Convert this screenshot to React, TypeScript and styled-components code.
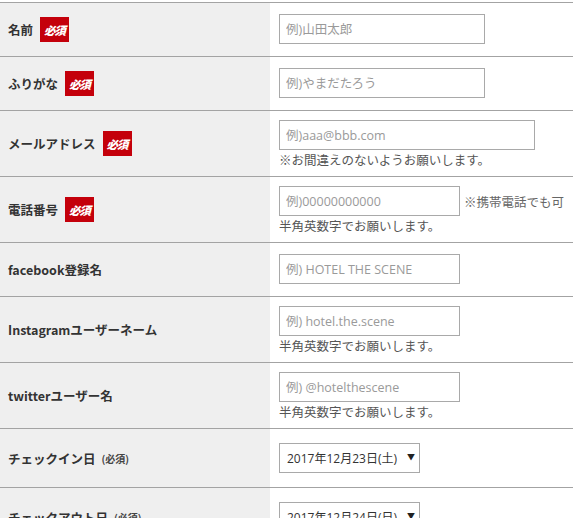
import React from "react";
import styled, { createGlobalStyle } from "styled-components";

const GlobalStyle = createGlobalStyle`
  body {
    margin: 0;
    background: #fff;
    font-family: "Noto Sans CJK JP", "Noto Sans", sans-serif;
    color: #333;
  }
`;

type RowKind = "plain" | "note" | "select";

interface Field {
  label: string;
  required?: "badge" | "small";
  kind: RowKind;
  placeholder?: string;
  width?: number;
  side?: string;
  note?: string;
  value?: string;
}

const fields: Field[] = [
  { label: "名前", required: "badge", kind: "plain", placeholder: "例)山田太郎", width: 206 },
  { label: "ふりがな", required: "badge", kind: "plain", placeholder: "例)やまだたろう", width: 206 },
  {
    label: "メールアドレス",
    required: "badge",
    kind: "note",
    placeholder: "例)aaa@bbb.com",
    width: 256,
    note: "※お間違えのないようお願いします。",
  },
  {
    label: "電話番号",
    required: "badge",
    kind: "note",
    placeholder: "例)00000000000",
    width: 181,
    side: "※携帯電話でも可",
    note: "半角英数字でお願いします。",
  },
  { label: "facebook登録名", kind: "plain", placeholder: "例) HOTEL THE SCENE", width: 181 },
  {
    label: "Instagramユーザーネーム",
    kind: "note",
    placeholder: "例) hotel.the.scene",
    width: 181,
    note: "半角英数字でお願いします。",
  },
  {
    label: "twitterユーザー名",
    kind: "note",
    placeholder: "例) @hotelthescene",
    width: 181,
    note: "半角英数字でお願いします。",
  },
  { label: "チェックイン日", required: "small", kind: "select", value: "2017年12月23日(土)" },
  { label: "チェックアウト日", required: "small", kind: "select", value: "2017年12月24日(日)" },
];

function App() {
  return (
    <>
      <GlobalStyle />
      <FormTable>
        {fields.map((f) => (
          <Row key={f.label}>
            <LabelCell>
              <LabelText>{f.label}</LabelText>
              {f.required === "badge" && <Badge>必須</Badge>}
              {f.required === "small" && <SmallRequired>(必須)</SmallRequired>}
            </LabelCell>
            <InputCell $kind={f.kind}>
              {f.kind === "select" ? (
                <SelectWrap>
                  <DateSelect defaultValue={f.value}>
                    <option>{f.value}</option>
                  </DateSelect>
                  <Arrow>▼</Arrow>
                </SelectWrap>
              ) : (
                <>
                  <InputLine>
                    <TextInput
                      type="text"
                      placeholder={f.placeholder}
                      $width={f.width || 206}
                    />
                    {f.side && <SideNote>{f.side}</SideNote>}
                  </InputLine>
                  {f.note && <Note>{f.note}</Note>}
                </>
              )}
            </InputCell>
          </Row>
        ))}
      </FormTable>
    </>
  );
}

export default App;

const FormTable = styled.div`
  margin-top: 2px;
  border-top: 1px solid #a3a3a3;
  width: 573px;
`;

const Row = styled.div`
  display: grid;
  grid-template-columns: 270px 1fr;
  border-bottom: 1px solid #a3a3a3;
`;

const LabelCell = styled.div`
  display: flex;
  align-items: center;
  background: #efefef;
  padding-left: 8px;
`;

const LabelText = styled.span`
  font-size: 12.5px;
  font-weight: 700;
  color: #333;
`;

const Badge = styled.span`
  display: inline-flex;
  align-items: center;
  justify-content: center;
  width: 29px;
  height: 25px;
  margin-left: 7px;
  background: #c4000b;
  color: #fff;
  font-size: 11.5px;
  font-weight: 900;
  font-style: italic;
  letter-spacing: -1px;
`;

const SmallRequired = styled.span`
  margin-left: 6px;
  font-size: 10px;
  font-weight: 700;
  color: #444;
`;

const InputCell = styled.div<{ $kind: RowKind }>`
  display: flex;
  flex-direction: column;
  background: #fff;
  padding: ${(p) =>
    p.$kind === "note" ? "9px 9px 6px" : p.$kind === "select" ? "14px 9px" : "11px 9px 12px"};
`;

const InputLine = styled.div`
  display: flex;
  align-items: center;
  gap: 4px;
`;

const TextInput = styled.input<{ $width: number }>`
  box-sizing: border-box;
  width: ${(p) => p.$width}px;
  height: 30px;
  margin: 0;
  padding: 0 6px;
  border: 1px solid #a9a9a9;
  border-radius: 0;
  outline: none;
  font-family: "Open Sans", "Noto Sans CJK JP", sans-serif;
  font-size: 12.5px;
  color: #333;

  &::placeholder {
    color: #9a9a9a;
  }
`;

const SideNote = styled.span`
  font-size: 12.5px;
  color: #666;
  white-space: nowrap;
`;

const Note = styled.div`
  font-size: 12.5px;
  line-height: 20px;
  color: #555;
`;

const SelectWrap = styled.div`
  position: relative;
  width: 141px;
  height: 30px;
`;

const DateSelect = styled.select`
  box-sizing: border-box;
  appearance: none;
  -webkit-appearance: none;
  width: 100%;
  height: 30px;
  margin: 0;
  padding: 0 0 0 7px;
  border: 1px solid #a9a9a9;
  border-radius: 0;
  background: #fff;
  font-family: "Open Sans", "Noto Sans CJK JP", sans-serif;
  font-size: 12px;
  color: #333;
`;

const Arrow = styled.span`
  position: absolute;
  right: 5px;
  top: 8px;
  font-size: 8px;
  color: #222;
  pointer-events: none;
`;
